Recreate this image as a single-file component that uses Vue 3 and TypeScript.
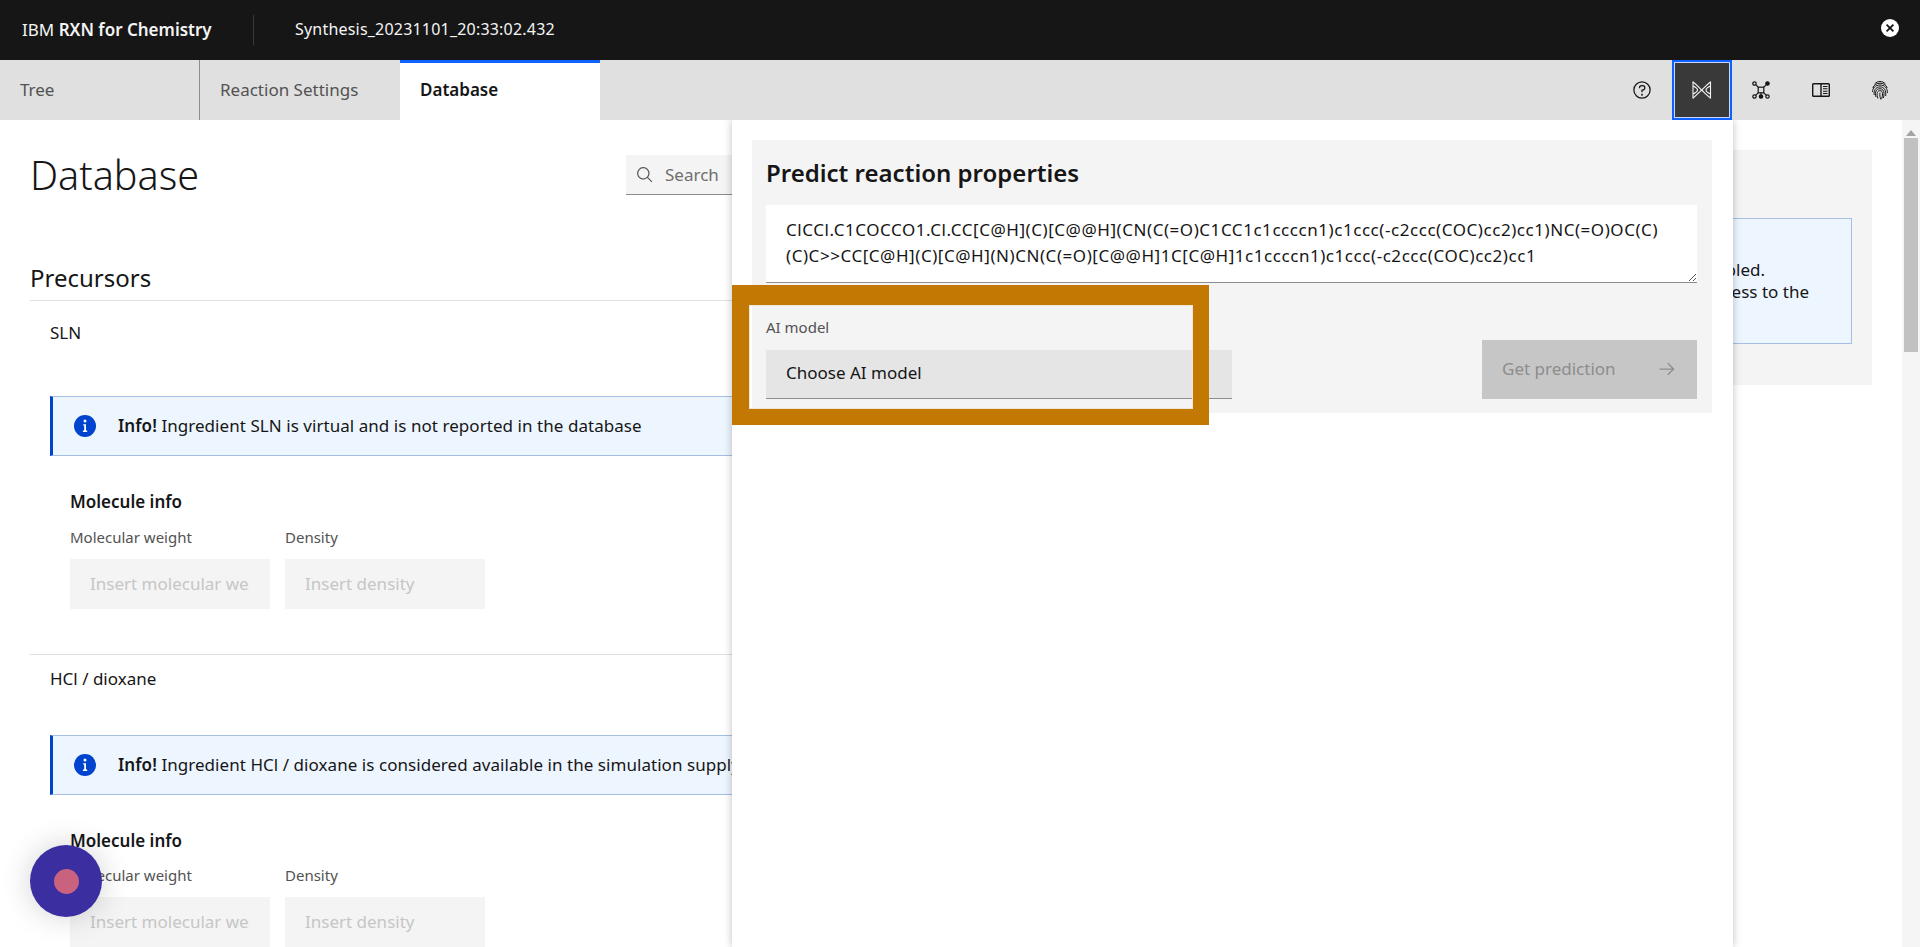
<template>
  <div class="app">
    <header class="topbar">
      <div class="brand">IBM <b>RXN for Chemistry</b></div>
      <div class="sep"></div>
      <div class="doc-name">Synthesis_20231101_20:33:02.432</div>
      <button class="close-btn" aria-label="Close">
        <svg viewBox="0 0 18 18" width="18" height="18">
          <circle cx="9" cy="9" r="9" fill="#fff" />
          <path d="M5.600 5.600l6.800 6.800M12.400 5.600l-6.800 6.800" stroke="#161616" stroke-width="1.800" />
        </svg>
      </button>
    </header>

    <nav class="tabbar">
      <div class="tabs">
        <div
          v-for="tab in tabs"
          :key="tab"
          class="tab"
          :class="{ active: tab === 'Database' }"
        >
          {{ tab }}
        </div>
      </div>
      <div class="tools">
        <button class="tool">
          <svg viewBox="0 0 32 32" width="20" height="20" fill="#161616">
            <path d="M16,2A14,14,0,1,0,30,16,14,14,0,0,0,16,2Zm0,26A12,12,0,1,1,28,16,12,12,0,0,1,16,28Z" />
            <circle cx="16" cy="23.500" r="1.500" />
            <path d="M17,8H15.500A4.490,4.490,0,0,0,11,12.500V13h2v-.5A2.500,2.500,0,0,1,15.500,10H17a2.500,2.500,0,0,1,0,5H15v4.500h2V17a4.500,4.500,0,0,0,0-9Z" />
          </svg>
        </button>
        <button class="tool selected">
          <svg viewBox="0 0 20 18" width="20" height="18" fill="none" stroke="#f4f4f4" stroke-width="1.100">
            <path d="M1 .5v17M18.500 .5v17" />
            <path d="M1 1c4 3 6 5.500 8.700 8s4.800 5 8.800 8" />
            <path d="M18.500 1c-4 3-6 5.500-8.800 8s-4.700 5-8.700 8" />
            <path d="M1 5c3.500 1.500 4.500 2.700 4.500 4s-1 2.500-4.500 4M18.500 5c-3.500 1.500-4.500 2.700-4.500 4s1 2.500 4.500 4" />
          </svg>
        </button>
        <button class="tool">
          <svg viewBox="0 0 18 18" width="18" height="18" fill="none" stroke="#161616" stroke-width="1.200">
            <rect x="6.200" y="6.200" width="5.600" height="5.600" />
            <path d="M6.200 6.200L3.600 3.600M11.800 6.200l2.600-2.600M6.200 11.800l-2.600 2.600M11.800 11.800l2.600 2.600M9 11.800v2" />
            <circle cx="2.500" cy="2.500" r="1.700" />
            <circle cx="15.500" cy="2.500" r="1.700" fill="#161616" />
            <circle cx="2.500" cy="15.500" r="1.700" />
            <circle cx="9" cy="15.500" r="1.700" fill="#161616" />
            <circle cx="15.500" cy="15.500" r="1.700" />
          </svg>
        </button>
        <button class="tool">
          <svg viewBox="0 0 18 14" width="18" height="14" fill="none" stroke="#161616" stroke-width="1.400">
            <rect x=".7" y=".7" width="16.600" height="12.600" rx=".8" />
            <path d="M9 .7v12.600" />
            <path d="M11 3.500h4.500M11 5.800h4.500M11 8.200h4.500M11 10.500h4.500" stroke-width="1.100" />
          </svg>
        </button>
        <button class="tool">
          <svg viewBox="0 0 16 19" width="16" height="19" fill="none" stroke="#161616" stroke-width="1">
            <path d="M2.500 3C4 1.300 6 .5 8 .5s4 .8 5.500 2.500" />
            <path d="M.8 7C1.800 3.800 4.600 2.200 8 2.200s6.200 1.600 7.200 4.800" />
            <path d="M.6 11C.4 7 3.500 4 8 4s7.600 3 7.400 8" />
            <path d="M2.200 14C1.500 9.500 3.800 5.900 8 5.900s6.200 3.200 5.700 9.100" />
            <path d="M4 16C3.100 14 3.300 11 4 10c.8-1.400 2.200-2.300 4-2.300 2.500 0 4.100 2 4 5 0 1.500-.2 3-.6 4.300" />
            <path d="M6 17.500C5 15.500 4.800 13 5.500 11.300c.5-1 1.400-1.700 2.500-1.700 1.700 0 2.500 1.300 2.500 3.200 0 1.600-.2 3.200-.8 5" />
            <path d="M8 11.700c-.5 2.400 0 4.800 1 6.800" />
          </svg>
        </button>
      </div>
    </nav>

    <div class="workspace">
      <main class="page">
        <div class="page-head">
          <h1 class="page-title">Database</h1>
          <div class="search">
            <svg viewBox="0 0 32 32" width="18" height="18" fill="#525252">
              <path d="M29,27.586l-7.552-7.552a11.018,11.018,0,1,0-1.414,1.414L27.586,29ZM4,13a9,9,0,1,1,9,9A9.010,9.010,0,0,1,4,13Z" />
            </svg>
            <span>Search</span>
          </div>
        </div>

        <div class="columns">
          <section class="precursors">
            <h2 class="section-title">Precursors</h2>
            <article v-for="item in ingredients" :key="item.name" class="ingredient">
              <div class="ingredient-name">{{ item.name }}</div>
              <div class="notice">
                <svg viewBox="0 0 22 22" width="22" height="22" class="notice-icon">
                  <circle cx="11" cy="11" r="11" fill="#0043ce" />
                  <path d="M9.200 9.200h2.800v6.400h1.200v1.400H8.900v-1.400h1.300v-5H9.200z M11 4.600a1.500 1.500 0 1 1 0 3 1.500 1.500 0 0 1 0-3z" fill="#fff" />
                </svg>
                <span class="notice-text"><b>Info!</b> {{ item.info }}</span>
              </div>
              <h3 class="mol-title">Molecule info</h3>
              <div class="mol-fields">
                <label class="mol-field">
                  <span class="field-label">Molecular weight</span>
                  <input class="field-input" disabled placeholder="Insert molecular weight">
                </label>
                <label class="mol-field">
                  <span class="field-label">Density</span>
                  <input class="field-input" disabled placeholder="Insert density">
                </label>
              </div>
            </article>
          </section>

          <aside class="side-card">
            <div class="side-notice">
              <div class="side-line first">Simulation of this action is currently disabled.</div>
              <div class="side-line">Please request additional access to the</div>
            </div>
          </aside>
        </div>
      </main>

      <div class="scrollbar">
        <span class="scroll-arrow"></span>
        <span class="scroll-thumb"></span>
      </div>

      <!-- side panel lies over the page -->
      <div class="panel">
        <div class="panel-card">
          <h2 class="panel-title">Predict reaction properties</h2>
          <div class="smiles">
            <div v-for="line in smiles" :key="line">{{ line }}</div>
            <svg class="grip" viewBox="0 0 8 8" width="8" height="8" fill="none" stroke="#525252">
              <path d="M1 8l7-7M5 8l3-3" />
            </svg>
          </div>
          <div class="predict-row">
            <div class="model-field">
              <div class="model-label">AI model</div>
              <div class="model-select">Choose AI model</div>
            </div>
            <button class="predict-btn" disabled>
              <span>Get prediction</span>
              <svg viewBox="0 0 32 32" width="20" height="20" fill="#8d8d8d">
                <path d="M18 6L16.570 7.393 24.150 15 4 15 4 17 24.150 17 16.570 24.573 18 26 28 16 18 6z" />
              </svg>
            </button>
          </div>
        </div>
      </div>

      <!-- annotation frame over the AI model field -->
      <div class="highlight"></div>

      <div class="fab"><span class="fab-dot"></span></div>
    </div>
  </div>
</template>

<script setup lang="ts">
const tabs: string[] = ['Tree', 'Reaction Settings', 'Database']

const ingredients = [
  { name: 'SLN', info: 'Ingredient SLN is virtual and is not reported in the database' },
  { name: 'HCl / dioxane', info: 'Ingredient HCl / dioxane is considered available in the simulation supply' }
]

const smiles: string[] = [
  'ClCCl.C1COCCO1.Cl.CC[C@H](C)[C@@H](CN(C(=O)C1CC1c1ccccn1)c1ccc(-c2ccc(COC)cc2)cc1)NC(=O)OC(C)',
  '(C)C>>CC[C@H](C)[C@H](N)CN(C(=O)[C@@H]1C[C@H]1c1ccccn1)c1ccc(-c2ccc(COC)cc2)cc1'
]
</script>

<style>
html,
body {
  margin: 0;
  height: 100%;
  overflow: hidden;
  background: #fff;
}
</style>

<style scoped>
.app {
  height: 947px;
  display: flex;
  flex-direction: column;
  font-family: "Noto Sans", "Liberation Sans", sans-serif;
  color: #161616;
  overflow: hidden;
}

.topbar {
  height: 60px;
  flex: none;
  background: #161616;
  color: #f4f4f4;
  display: flex;
  align-items: center;
  padding: 0 21px 0 22px;
}

.brand {
  width: 231px;
  margin-top: -2px;
  font-size: 17px;
}

.brand b {
  font-weight: 600;
}

.sep {
  width: 1px;
  height: 30px;
  background: #393939;
}

.doc-name {
  margin: -3px 0 0 41px;
  font-size: 16px;
  letter-spacing: 0.2px;
}

.close-btn {
  margin-left: auto;
  padding: 0;
  width: 18px;
  height: 18px;
  border: none;
  background: none;
  margin-top: -4px;
}

.tabbar {
  height: 60px;
  flex: none;
  background: #e0e0e0;
  display: flex;
  justify-content: space-between;
}

.tabs {
  display: flex;
}

.tab {
  width: 200px;
  box-sizing: border-box;
  padding: 0 20px 2px;
  display: flex;
  align-items: center;
  font-size: 17px;
  color: #525252;
  border-right: 1px solid #8d8d8d;
}

.tab:nth-child(2) {
  border-right: none;
}

.tab.active {
  background: #fff;
  color: #161616;
  font-weight: 600;
  border-top: 3px solid #0f62fe;
  border-right: none;
  padding-bottom: 5px;
}

.tools {
  display: flex;
  padding-right: 10px;
}

.tool {
  width: 59.5px;
  height: 60px;
  padding: 0;
  border: none;
  background: none;
  display: flex;
  align-items: center;
  justify-content: center;
}

.tool.selected {
  background: #393939;
  box-sizing: border-box;
  border: 2px solid #0f62fe;
  box-shadow: inset 0 0 0 1px #c6d8fb;
}

.workspace {
  position: relative;
  flex: 1;
  min-height: 0;
  display: flex;
  overflow: hidden;
}

.page {
  flex: 1;
  min-width: 0;
  padding: 0 30px;
  overflow: hidden;
}

.page-head {
  height: 112px;
  display: flex;
  align-items: flex-start;
}

.page-title {
  flex: none;
  width: 500px;
  margin: 30px 0 0;
  font-size: 39.5px;
  line-height: 50px;
  font-weight: 300;
}

.search {
  margin: 35px 0 0 96px;
  width: 300px;
  height: 39px;
  background: #f4f4f4;
  border-bottom: 1px solid #8d8d8d;
  display: flex;
  align-items: center;
  gap: 11px;
  padding-left: 10px;
  font-size: 17px;
  color: #6f6f6f;
}

.columns {
  display: flex;
  gap: 92px;
}

.precursors {
  flex: none;
  width: 1370px;
}

.section-title {
  margin: 30px 0 8px;
  height: 38px;
  font-size: 24px;
  line-height: 32px;
  font-weight: 400;
  border-bottom: 1px solid #e0e0e0;
}

.ingredient {
  padding: 12px 20px 45px;
  border-bottom: 1px solid #e0e0e0;
}

.ingredient-name {
  font-size: 17px;
  line-height: 24px;
}

.notice {
  margin-top: 44px;
  height: 60px;
  box-sizing: border-box;
  background: #edf5ff;
  border: 1px solid #a6bfe0;
  border-left: 3px solid #0043ce;
  padding-left: 21px;
  display: flex;
  align-items: center;
  gap: 22px;
  font-size: 17px;
  letter-spacing: 0.05px;
  white-space: nowrap;
}

.notice-text {
  margin-top: -2px;
}

.ingredient:first-of-type .notice {
  margin-top: 51px;
}

.notice b {
  font-weight: 600;
}

.notice-icon {
  flex: none;
}

.mol-title {
  margin: 34px 0 0 20px;
  font-size: 17px;
  line-height: 24px;
  font-weight: 600;
}

.mol-fields {
  margin: 13px 0 0 20px;
  display: flex;
  gap: 15px;
}

.ingredient:first-of-type .mol-fields {
  margin-top: 14px;
}

.mol-field {
  width: 200px;
  display: flex;
  flex-direction: column;
  gap: 13px;
}

.field-label {
  font-size: 15px;
  line-height: 18px;
  color: #525252;
}

.field-input {
  width: 100%;
  height: 50px;
  box-sizing: border-box;
  border: none;
  outline: none;
  background: #f4f4f4;
  font-family: inherit;
  font-size: 17px;
  padding: 0 20px 2px;
}

.field-input::placeholder {
  color: #c6c6c6;
  opacity: 1;
}

.side-card {
  flex: none;
  width: 380px;
  height: 235px;
  margin-top: -82px;
  background: #f4f4f4;
  padding: 68px 20px 0;
  box-sizing: border-box;
}

.side-notice {
  height: 126px;
  box-sizing: border-box;
  background: #edf5ff;
  border: 1px solid #a6bfe0;
  padding-right: 42px;
  display: flex;
  flex-direction: column;
  justify-content: center;
  align-items: flex-end;
  font-size: 17px;
  line-height: 22px;
  white-space: nowrap;
}

.side-line.first {
  margin-right: 44px;
}

.scrollbar {
  flex: none;
  width: 18px;
  background: #f5f5f5;
  position: relative;
}

.scroll-arrow {
  position: absolute;
  top: 10px;
  left: 4px;
  border: 5px solid transparent;
  border-top: none;
  border-bottom: 6px solid #a3a3a3;
}

.scroll-thumb {
  position: absolute;
  top: 18px;
  left: 2px;
  width: 14px;
  height: 214px;
  background: #c1c1c1;
}

.panel {
  position: absolute;
  top: 0;
  bottom: 0;
  left: 732px;
  width: 1001px;
  box-sizing: border-box;
  background: #fff;
  padding: 20px 21px 0 20px;
  box-shadow: 0 0 8px rgba(0, 0, 0, 0.25);
}

.panel-card {
  height: 273px;
  box-sizing: border-box;
  background: #f4f4f4;
  padding: 16px 15px 0 14px;
}

.panel-title {
  margin: 0;
  font-size: 24px;
  line-height: 34px;
  font-weight: 600;
}

.smiles {
  position: relative;
  margin-top: 15px;
  height: 78px;
  box-sizing: border-box;
  background: #fff;
  border-bottom: 1px solid #8d8d8d;
  padding: 12px 20px 0;
  font-size: 17px;
  line-height: 26px;
  letter-spacing: 0.55px;
  white-space: nowrap;
}

.grip {
  position: absolute;
  right: 1px;
  bottom: 1px;
}

.predict-row {
  margin-top: 35px;
  display: flex;
  justify-content: space-between;
  align-items: flex-end;
}

.model-label {
  font-size: 15px;
  line-height: 18px;
  color: #525252;
}

.model-select {
  margin-top: 14px;
  width: 466px;
  height: 49px;
  box-sizing: border-box;
  background: #e5e5e5;
  border-bottom: 1px solid #8d8d8d;
  padding: 0 20px;
  font-size: 17px;
  line-height: 46px;
}

.predict-btn {
  width: 215px;
  height: 59px;
  box-sizing: border-box;
  border: none;
  background: #c6c6c6;
  color: #8d8d8d;
  font: inherit;
  font-size: 17px;
  padding: 0 20px 2px 20px;
  display: flex;
  align-items: center;
  justify-content: space-between;
}

.highlight {
  position: absolute;
  left: 732px;
  top: 165px;
  width: 477px;
  height: 140px;
  box-sizing: border-box;
  border-style: solid;
  border-color: #c27803;
  border-width: 20px 16px 16px 17px;
}

.highlight::after {
  content: "";
  position: absolute;
  inset: 0;
  border: 1px solid #efe6d6;
}

.fab {
  position: absolute;
  left: 30px;
  top: 725px;
  width: 72px;
  height: 72px;
  border-radius: 50%;
  background: #3a2ea0;
  box-shadow: 0 0 30px rgba(0, 0, 0, 0.18);
  display: flex;
  align-items: center;
  justify-content: center;
}

.fab-dot {
  width: 25px;
  height: 25px;
  border-radius: 50%;
  background: #c9627f;
}
</style>
